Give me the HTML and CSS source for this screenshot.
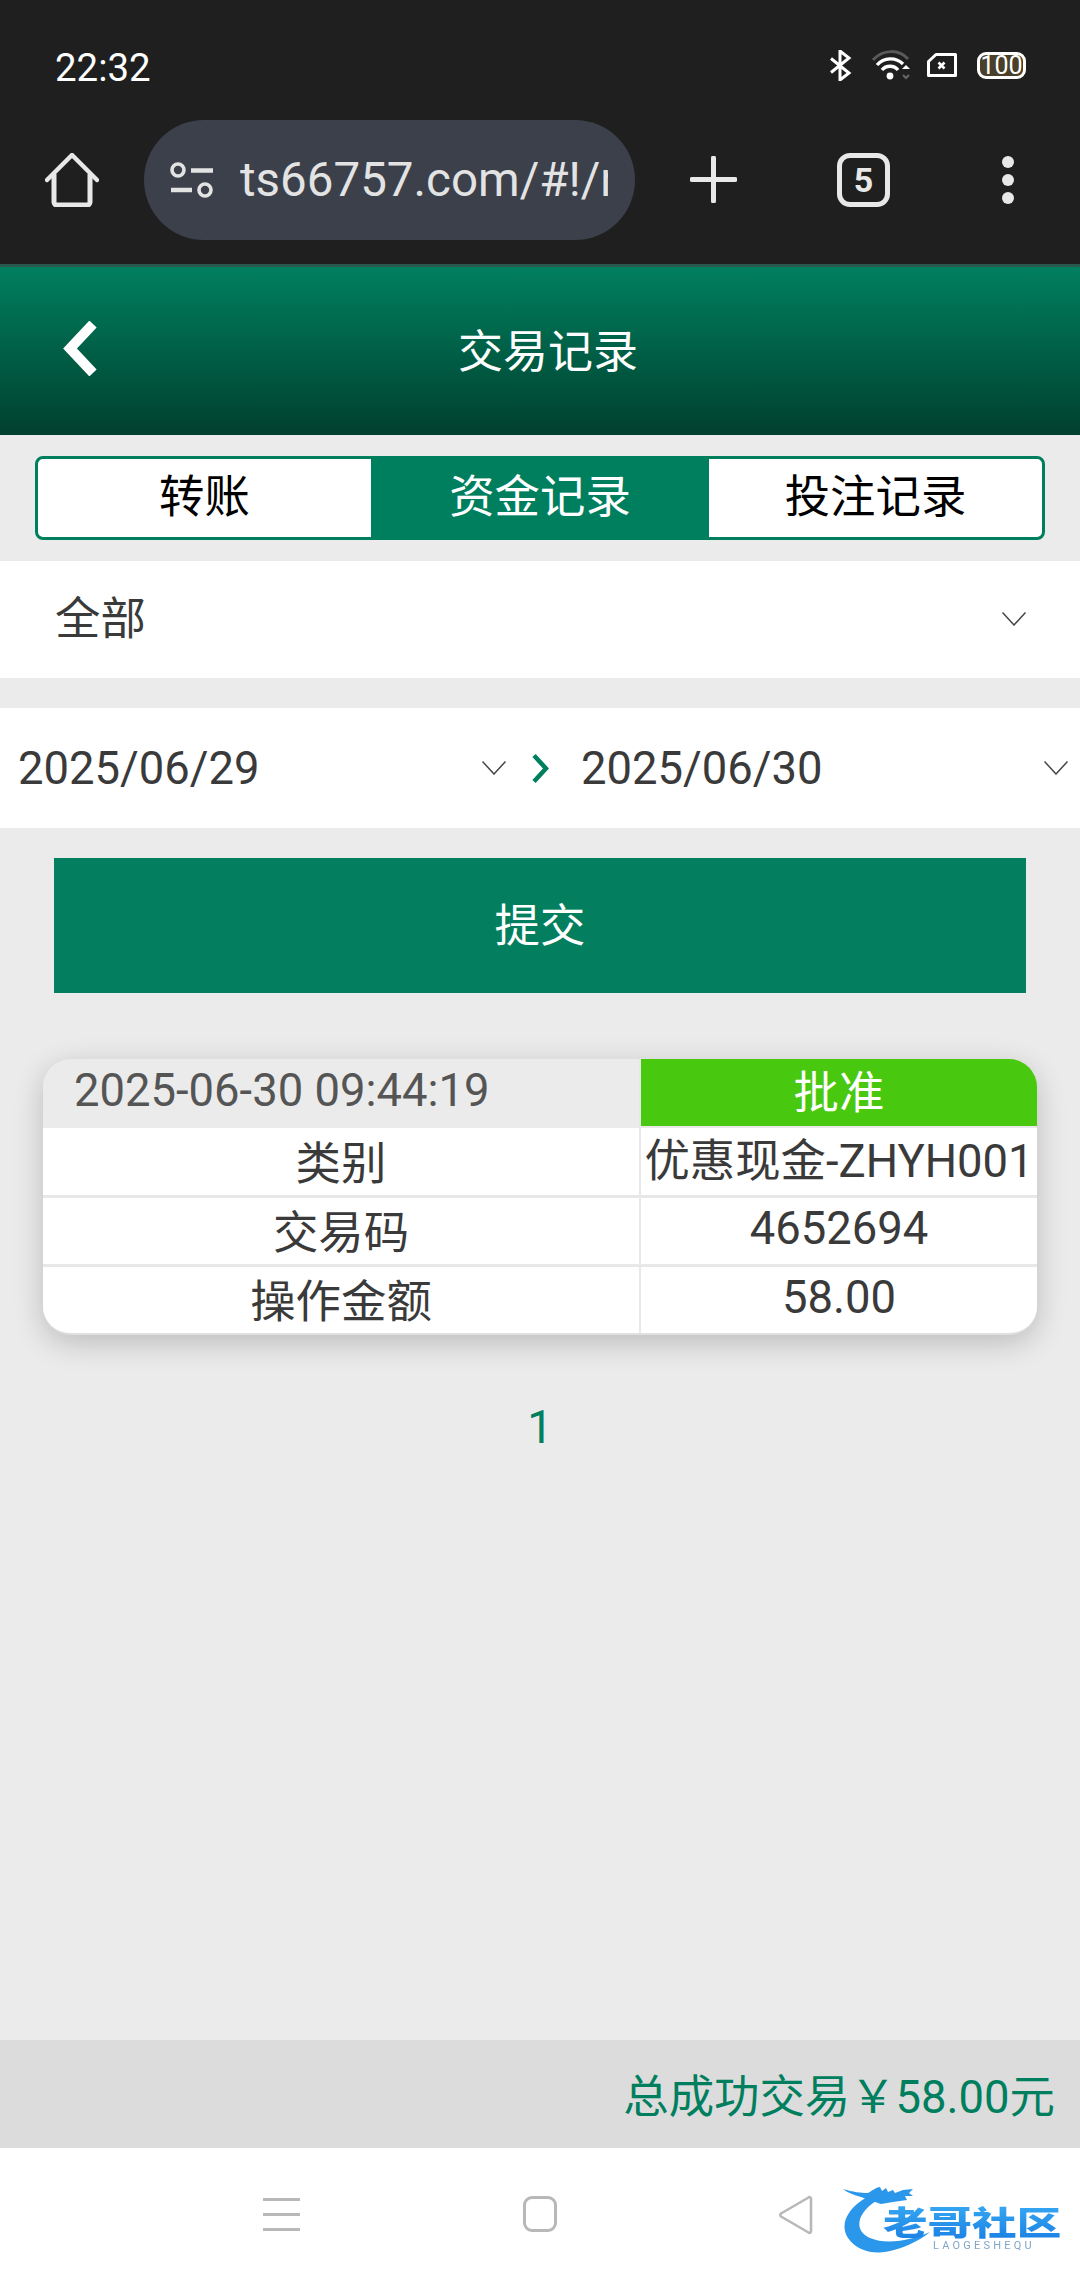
FILE: index.html
```html
<!DOCTYPE html>
<html lang="zh-CN">
<head>
<meta charset="utf-8">
<title>交易记录</title>
<link rel="stylesheet" href="styles.css">
</head>
<body>
<div class="screen">
  <div class="chrome">
    <div class="status">
      <span class="time">22:32</span>
      <div class="status-icons">
        <svg class="i-bt" viewBox="0 0 23 31"><path d="M2 8.500 20 23 11 30V1l9 7L2 22.500" fill="none" stroke="#fff" stroke-width="3"/></svg>
        <svg class="i-wifi" viewBox="0 0 39 30">
          <path d="M1 10C11 -1 27 -1 36 9" fill="none" stroke="#5a5a5a" stroke-width="3"/>
          <path d="M5 15C12 7 24 7 31 14" fill="none" stroke="#fff" stroke-width="3.400"/>
          <path d="M10 20C14 15 22 15 26 20" fill="none" stroke="#fff" stroke-width="3.400"/>
          <circle cx="18" cy="26" r="3.400" fill="#fff"/>
          <path d="M30 19l4-4 4 4z" fill="#fff"/><path d="M31 25l3 3 3-3" fill="none" stroke="#666" stroke-width="2"/>
        </svg>
        <svg class="i-sim" viewBox="0 0 30 24"><path d="M9 1.500H28.500V22.500H1.500V8.500Z" fill="none" stroke="#fff" stroke-width="3" stroke-linejoin="round"/><path d="M11.500 9.500l6 6M17.500 9.500l-6 6" stroke="#fff" stroke-width="2.600"/></svg>
        <div class="battery"><span>100</span></div>
      </div>
    </div>
    <div class="toolbar">
      <svg class="i-home" viewBox="0 0 54 54"><path d="M2 27 27 2l25 25" fill="none" stroke="#e8e8e8" stroke-width="4.500" stroke-linecap="round" stroke-linejoin="round"/><path d="M9 21V49a3 3 0 0 0 3 3H42a3 3 0 0 0 3-3V21" fill="none" stroke="#e8e8e8" stroke-width="5"/></svg>
      <div class="pill">
        <svg class="i-tune" viewBox="0 0 44 36"><circle cx="8" cy="8" r="6" fill="none" stroke="#e3e3e3" stroke-width="3.600"/><path d="M21 8.500H43M1 28H22" stroke="#e3e3e3" stroke-width="4.400"/><circle cx="35" cy="28" r="6" fill="none" stroke="#e3e3e3" stroke-width="3.600"/></svg>
        <div class="url">ts66757.com/#!/record</div>
      </div>
      <svg class="i-plus" viewBox="0 0 47 47"><path d="M23.500 2V45M2 23.500H45" stroke="#e8e8e8" stroke-width="5" stroke-linecap="round"/></svg>
      <div class="tabcount">5</div>
      <div class="dots"><i></i><i></i><i></i></div>
    </div>
  </div>

  <header class="head">
    <svg class="i-back" viewBox="0 0 35 55"><path d="M30 3 7 27.500 30 52" fill="none" stroke="#fff" stroke-width="10"/></svg>
    <h1 class="title">交易记录</h1>
  </header>

  <main class="main">
    <div class="tabs">
      <div class="tab">转账</div>
      <div class="tab tab-on">资金记录</div>
      <div class="tab">投注记录</div>
    </div>

    <div class="select">
      <span class="select-text">全部</span>
      <svg class="caret" viewBox="0 0 24 14"><path d="M.5.500 12 13 23.500.500" fill="none" stroke="#444" stroke-width="1.500"/></svg>
    </div>

    <div class="dates">
      <div class="date date-a">
        <span>2025/06/29</span>
        <svg class="caret" viewBox="0 0 24 14"><path d="M.5.500 12 13 23.500.500" fill="none" stroke="#444" stroke-width="1.500"/></svg>
      </div>
      <svg class="i-next" viewBox="0 0 17 29"><path d="M2 1.500 14 14.500 2 27.500" fill="none" stroke="#007f5f" stroke-width="4.500"/></svg>
      <div class="date date-b">
        <span>2025/06/30</span>
        <svg class="caret" viewBox="0 0 24 14"><path d="M.5.500 12 13 23.500.500" fill="none" stroke="#444" stroke-width="1.500"/></svg>
      </div>
    </div>

    <button class="submit">提交</button>

    <section class="card">
      <div class="cell cell-date">2025-06-30 09:44:19</div>
      <div class="cell cell-ok">批准</div>
      <div class="cell cell-l">类别</div>
      <div class="cell cell-r">优惠现金-ZHYH001</div>
      <div class="cell cell-l">交易码</div>
      <div class="cell cell-r cell-num">4652694</div>
      <div class="cell cell-l">操作金额</div>
      <div class="cell cell-r cell-num">58.00</div>
    </section>

    <div class="pager">1</div>
  </main>

  <div class="total">总成功交易￥58.00元</div>

  <nav class="nav">
    <div class="nav-menu"><i></i><i></i><i></i></div>
    <div class="nav-home"></div>
    <svg class="nav-back" viewBox="0 0 36 40"><path d="M33 3.500V36.500a1.500 1.500 0 0 1-2.500 1L3 21.500a2 2 0 0 1 0-3L30.500 2.500a1.500 1.500 0 0 1 2.500 1Z" fill="none" stroke="#b8b8b8" stroke-width="2.600" stroke-linejoin="round"/></svg>
    <div class="logo">
      <svg class="logo-art" viewBox="0 0 221 71">
        <path d="M25 11C6 22-3 38 6 52c10 15 30 17 46 12 14-4 26-10 36-18C72 53 46 60 28 52 12 45 14 28 34 15Z" fill="#2b97ea"/>
        <path d="M1 3c10 3 18 4 25 4 5-3 9-6 12-6l2 4 4-3 2 4 5-2 2 3 8-3 10-1-4 4 4 3-8 0 2 4-14 2-12 2-12-4-8-3C12 9 6 7 1 3Z" fill="#2b97ea"/>
      </svg>
      <span class="logo-name">老哥社区</span>
      <span class="logo-sub">LAOGESHEQU</span>
    </div>
  </nav>
</div>
</body>
</html>
```
FILE: styles.css
```css
* { box-sizing: border-box; }
html, body { margin: 0; padding: 0; }
body {
  font-family: Roboto, "Noto Sans CJK SC", sans-serif;
  font-size: 45.400px;
  color: #3a3a3a;
  background: #ebebeb;
}
.screen { width: 1080px; height: 2280px; display: flex; flex-direction: column; overflow: hidden; }

/* Browser chrome */
.chrome { height: 264px; background: #1f1f1f; flex: none; }
.status { height: 120px; padding: 47px 54px 0 55px; display: flex; justify-content: space-between; align-items: flex-start; }
.time { font-size: 38.400px; line-height: 42px; color: #fff; }
.status-icons { display: flex; align-items: center; height: 36px; }
.i-bt { width: 23px; height: 31px; margin-right: 20px; }
.i-wifi { width: 39px; height: 30px; margin-right: 16px; }
.i-sim { width: 30px; height: 24px; margin-right: 20px; }
.battery {
  width: 49px; height: 27px; border: 3px solid #fff; border-radius: 9px;
  background: #4a3f28; display: flex; align-items: center; justify-content: center;
  color: #fff; font-size: 25px; line-height: 21px;
}
.toolbar { height: 144px; display: flex; align-items: flex-start; padding-left: 45px; }
.i-home { width: 54px; height: 54px; margin-top: 33px; margin-right: 45px; flex: none; }
.pill {
  width: 491px; height: 120px; background: #3b404a; border-radius: 60px;
  display: flex; align-items: center; padding-left: 26px; flex: none;
}
.i-tune { width: 44px; height: 36px; flex: none; margin-right: 26px; }
.url { width: 368px; overflow: hidden; white-space: nowrap; font-size: 47.500px; line-height: 60px; color: #e3e3e3; }
.i-plus { width: 47px; height: 47px; margin: 36px 0 0 55px; flex: none; }
.tabcount {
  width: 53px; height: 54px; margin: 33px 0 0 100px; flex: none;
  border: 5px solid #e8e8e8; border-radius: 13px;
  display: flex; align-items: center; justify-content: center;
  color: #e8e8e8; font-size: 34px; font-weight: 700;
}
.dots { display: flex; flex-direction: column; gap: 6px; margin: 36px 0 0 112px; }
.dots i { display: block; width: 12px; height: 12px; border-radius: 50%; background: #e8e8e8; }

/* Page header */
.head {
  height: 171px; flex: none; position: relative;
  background: linear-gradient(#007f5f, #00402e);
  border-top: 3px solid #28594c;
  display: flex; align-items: center; justify-content: center;
  padding: 4px 0 0 16px;
}
.i-back { position: absolute; left: 63px; top: 54px; width: 35px; height: 55px; }
.title { margin: 0; font-size: 45px; font-weight: 400; color: #fff; line-height: 60px; }

/* Main */
.main { flex: 1; display: flex; flex-direction: column; }
.tabs {
  margin: 21px 35px 0 35px; height: 84px; flex: none;
  border: 3px solid #007f5f; border-radius: 8px; background: #fff;
  display: grid; grid-template-columns: 333px 338px 1fr; overflow: hidden;
}
.tab { display: flex; align-items: center; justify-content: center; color: #000; line-height: 78px; padding-bottom: 2px; }
.tab-on { background: #007f5f; color: #fff; }
.select {
  margin-top: 21px; height: 117px; background: #fff; flex: none;
  display: flex; align-items: center; justify-content: space-between;
  padding: 0 54px 2px 55px;
}
.select-text { padding-bottom: 8px; }
.caret { width: 24px; height: 14px; flex: none; }
.dates {
  margin-top: 30px; height: 120px; background: #fff; flex: none;
  display: flex; align-items: center;
}
.date { display: flex; align-items: center; justify-content: space-between; }
.date-a { width: 506px; padding-left: 18px; }
.i-next { width: 17px; height: 29px; margin-left: 26px; flex: none; }
.date-b { width: 487px; margin-left: 32px; }
.submit {
  display: block; margin: 30px 54px 0; width: 972px; height: 135px; flex: none;
  border: 0; background: #037e5e; color: #fff;
  font: inherit; padding: 0 0 8px;
}
.card {
  margin: 66px 43px 0; height: 276px; flex: none;
  border-radius: 28px; overflow: hidden;
  background: #e8e8e8;
  box-shadow: 0 8px 30px rgba(0,0,0,.2);
  display: grid; grid-template-columns: 596px 1fr; grid-template-rows: 66px 67px 66px 66px;
  column-gap: 2px; row-gap: 3px;
  border-bottom: 2px solid #e0e0e0;
}
.cell { background: #fff; display: flex; align-items: center; justify-content: center; white-space: nowrap; line-height: 60px; }
.cell-date { background: #ebebeb; justify-content: flex-start; padding: 0 0 5px 31px; color: #555; margin-bottom: -3px; }
.cell-ok { background: #48c80e; color: #fff; margin-bottom: -1px; padding-top: 2px; }
.cell-l { padding-top: 6px; }
.cell-num { padding-bottom: 4px; }
.pager { margin-top: 63px; text-align: center; color: #007f5f; line-height: 60px; }

/* Footer */
.total {
  height: 108px; flex: none; background: #dcdcdc; color: #007f5f;
  display: flex; align-items: center; justify-content: flex-end;
  padding: 0 25px 2px 0; white-space: nowrap;
}
.nav {
  height: 132px; flex: none; background: #fff; position: relative;
  display: flex; align-items: flex-start; padding: 47px 0 0 263px;
}
.nav-menu { width: 37px; display: flex; flex-direction: column; gap: 12px; margin-top: 3px; }
.nav-menu i { display: block; height: 3px; background: #b8b8b8; }
.nav-home { width: 34px; height: 36px; border: 3px solid #b8b8b8; border-radius: 9px; margin: 1px 0 0 223px; }
.nav-back { width: 36px; height: 40px; margin-left: 221px; }
.logo { position: absolute; left: 842px; top: 38px; width: 221px; height: 71px; filter: blur(.7px); }
.logo-art { position: absolute; left: 0; top: 0; width: 221px; height: 71px; }
.logo-name {
  position: absolute; left: 41px; top: 20px; white-space: nowrap;
  font-size: 33px; font-weight: 900; line-height: 36px; letter-spacing: 0;
  transform-origin: 0 50%; transform: scaleX(1.35);
  background: linear-gradient(#35a6f2, #1a7fe2); -webkit-background-clip: text; background-clip: text; color: transparent;
}
.logo-sub {
  position: absolute; left: 91px; top: 54px; white-space: nowrap;
  font-size: 11px; line-height: 12px; letter-spacing: 3.200px; color: #7fa6c9;
}
```
